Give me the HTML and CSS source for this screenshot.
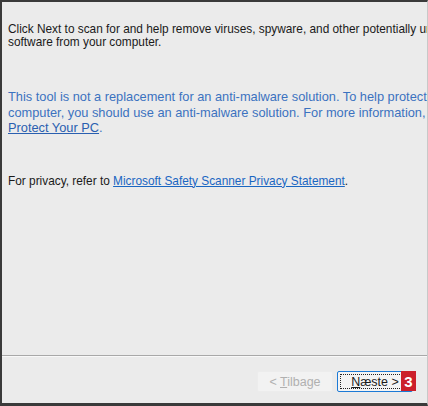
FILE: index.html
```html
<!DOCTYPE html>
<html>
<head>
<meta charset="utf-8">
<link rel="stylesheet" href="styles.css">
</head>
<body>
<div class="window">
  <div class="content">
    <p class="intro">Click Next to scan for and help remove viruses, spyware, and other potentially unwanted<br>software from your computer.</p>
    <p class="note">This tool is not a replacement for an anti-malware solution. To help protect your<br>computer, you should use an anti-malware solution. For more information, see<br><a href="#" class="link">Protect Your PC</a>.</p>
    <p class="privacy">For privacy, refer to <a href="#" class="link">Microsoft Safety Scanner Privacy Statement</a>.</p>
  </div>
  <div class="footer">
    <button class="btn disabled"><span>&lt; <u>T</u>ilbage</span></button>
    <div class="next-wrap">
      <button class="btn primary"><span class="focus"><span><u>N</u>æste &gt;</span></span></button>
      <span class="badge">3</span>
    </div>
  </div>
</div>
</body>
</html>
```
FILE: styles.css
```css
html, body {
  margin: 0;
  padding: 0;
  background: #ebebeb;
  overflow: hidden;
}
.window {
  width: 428px;
  height: 406px;
  box-sizing: border-box;
  border-top: 2px solid #3a3a3a;
  border-left: 2px solid #3a3a3a;
  border-bottom: 3px solid #3a3a3a;
  border-right: 1px solid #c8c8c8;
  background: #ebebeb;
  display: flex;
  flex-direction: column;
  font-family: "Liberation Sans", Arial, sans-serif;
  font-size: 11.85px;
  color: #1a1a1a;
}
.content {
  flex: 1;
  padding: 21px 0 0 6px;
  overflow: hidden;
  white-space: nowrap;
}
p { margin: 0; }
.intro {
  line-height: 13px;
}
.note {
  margin-top: 40px;
  line-height: 15.5px;
  font-size: 12.8px;
  color: #3b72c0;
}
.note .link { color: #2a5fb0; }
.privacy {
  margin-top: 38px;
  line-height: 14px;
}
.link {
  color: #1a66c2;
  text-decoration: underline;
}
.footer {
  height: 48px;
  box-sizing: border-box;
  border-top: 1px solid #a8a8a8;
  box-shadow: inset 0 1px 0 #f8f8f8;
  display: flex;
  justify-content: flex-end;
  align-items: flex-start;
  gap: 4px;
  padding: 15px 14px 0 0;
}
.btn {
  height: 21px;
  width: 76px;
  box-sizing: border-box;
  font-family: "Liberation Sans", Arial, sans-serif;
  font-size: 12.5px;
  padding: 0;
  border-radius: 2px;
  display: flex;
  align-items: center;
  justify-content: center;
}
.disabled {
  background: #f2f2f2;
  border: 1px solid #ececec;
  color: #b0b0b0;
}
.next-wrap {
  position: relative;
}
.primary {
  background: #f4f4f4;
  border: 1px solid #1c7ad6;
  color: #1a1a1a;
  padding: 2px;
}
.focus {
  flex: 1;
  align-self: stretch;
  border: 1px dotted #222;
  display: flex;
  align-items: center;
  justify-content: center;
}
.badge {
  position: absolute;
  right: -3px;
  top: 0;
  width: 15px;
  height: 20px;
  background: #cc1f2a;
  color: #fff;
  font-family: "Liberation Sans", Arial, sans-serif;
  font-weight: bold;
  font-size: 15px;
  display: flex;
  align-items: center;
  justify-content: center;
}
```
